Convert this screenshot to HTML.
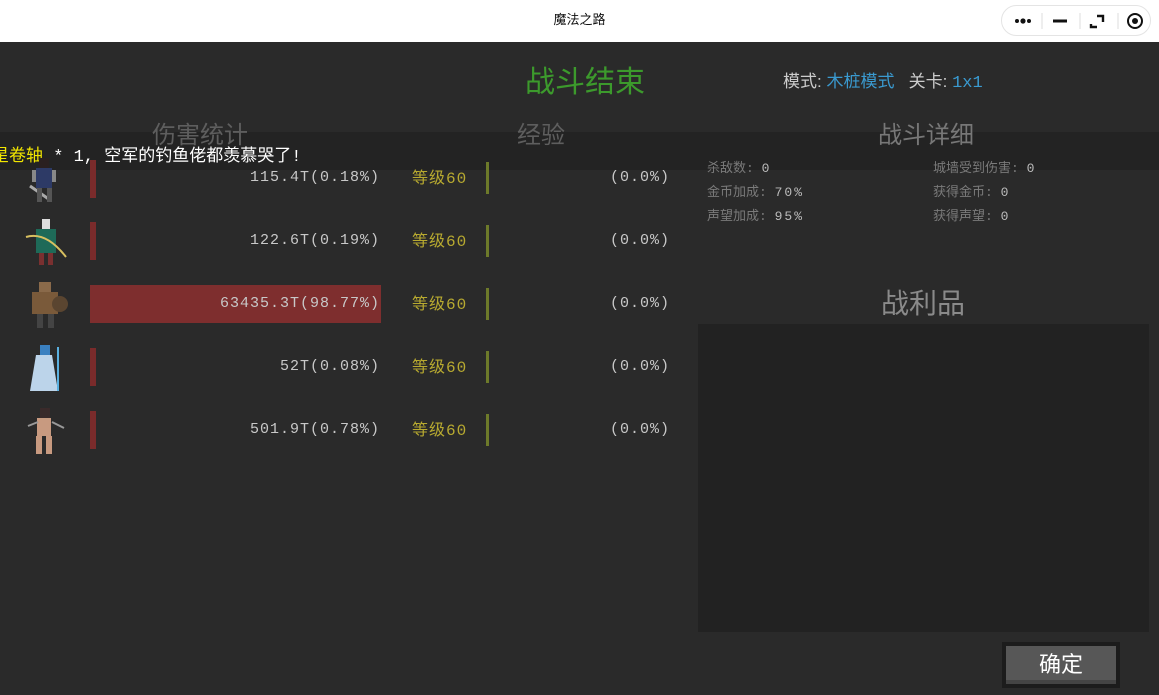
<!DOCTYPE html>
<html><head><meta charset="utf-8"><style>
*{margin:0;padding:0;box-sizing:border-box}
body{width:1159px;height:695px;overflow:hidden;background:#2a2a2a;font-family:"Liberation Mono","Noto Sans CJK SC",monospace;position:relative}
.a{position:absolute;white-space:nowrap}
.hdr{left:0;top:0;width:1159px;height:42px;background:#fff}
.cap{left:0;top:0;width:1159px;height:42px;font:13px "Liberation Sans","Noto Sans CJK SC",sans-serif;line-height:40px;text-align:center;color:#111}
.pill{left:1001px;top:5px;width:150px;height:31px;border:1px solid #e4e4e4;border-radius:16px;background:#fff}
.t{font-family:"Liberation Sans","Noto Sans CJK SC",sans-serif}
.num{font-size:15px;color:#c8c8c8;letter-spacing:1px}
.lv{font-size:16px;color:#b8aa30;font-family:"Liberation Mono","Noto Sans CJK SC",monospace;letter-spacing:1px}
.rb{width:6px;height:38px;background:#7a2b2b}
.gb{width:3px;height:32px;background:#6d7a2a}
.st{font-size:13px;color:#7a7a7a}
.st b{font-weight:normal;color:#bbb;letter-spacing:2px}
</style></head><body>
<div class="a hdr"></div>
<div class="a cap">魔法之路</div>
<div class="a pill">
 <svg width="150" height="31" style="position:absolute;left:-1px;top:-1px">
  <circle cx="16" cy="16" r="2" fill="#111"/><circle cx="22" cy="16" r="2.6" fill="#111"/><circle cx="28" cy="16" r="2" fill="#111"/>
  <line x1="41" y1="8" x2="41" y2="24" stroke="#ddd"/>
  <rect x="52" y="14.5" width="14" height="3" fill="#111"/>
  <line x1="79" y1="8" x2="79" y2="24" stroke="#ddd"/>
  <path d="M90 19v3h6M96 11h6v6" stroke="#111" stroke-width="2.4" fill="none"/>
  <line x1="117" y1="8" x2="117" y2="24" stroke="#ddd"/>
  <circle cx="134" cy="16" r="7" stroke="#111" stroke-width="2" fill="none"/><circle cx="134" cy="16" r="3" fill="#111"/>
 </svg>
</div>

<div class="a" style="left:0;top:132px;width:1159px;height:38px;background:#232323"></div>

<div class="a t" style="left:525px;top:57px;font-size:30px;color:#3c9a2c">战斗结束</div>
<div class="a t" style="left:783px;top:67px;font-size:17px;color:#ccc">模式: <span style="color:#3a9ad0">木桩模式</span>&nbsp;&nbsp;&nbsp;关卡: <span style="color:#3a9ad0;font-family:'Liberation Mono',monospace">1x1</span></div>

<div class="a t" style="left:152px;top:115px;font-size:24px;color:#5e5e5e">伤害统计</div>
<div class="a t" style="left:517px;top:115px;font-size:24px;color:#5e5e5e">经验</div>
<div class="a t" style="left:878px;top:115px;font-size:24px;color:#777">战斗详细</div>

<div class="a" style="left:-8px;top:141px;font-size:17px;color:#fff;font-family:'Liberation Mono','Noto Sans CJK SC',monospace"><span style="color:#f2e600">星卷轴</span> * 1, 空军的钓鱼佬都羡慕哭了!</div>

<div class="a rb" style="left:90px;top:160px"></div>
<div class="a rb" style="left:90px;top:222px"></div>
<div class="a rb" style="left:90px;top:285px;width:291px;background:#7e2e2e"></div>
<div class="a rb" style="left:90px;top:348px"></div>
<div class="a rb" style="left:90px;top:411px"></div>

<div class="a num" style="right:779px;top:169px">115.4T(0.18%)</div>
<div class="a num" style="right:779px;top:232px">122.6T(0.19%)</div>
<div class="a num" style="right:779px;top:295px">63435.3T(98.77%)</div>
<div class="a num" style="right:779px;top:358px">52T(0.08%)</div>
<div class="a num" style="right:779px;top:421px">501.9T(0.78%)</div>

<div class="a lv" style="left:412px;top:164px">等级60</div>
<div class="a lv" style="left:412px;top:227px">等级60</div>
<div class="a lv" style="left:412px;top:290px">等级60</div>
<div class="a lv" style="left:412px;top:353px">等级60</div>
<div class="a lv" style="left:412px;top:416px">等级60</div>

<div class="a gb" style="left:486px;top:162px"></div>
<div class="a gb" style="left:486px;top:225px"></div>
<div class="a gb" style="left:486px;top:288px"></div>
<div class="a gb" style="left:486px;top:351px"></div>
<div class="a gb" style="left:486px;top:414px"></div>

<div class="a num" style="right:489px;top:169px">(0.0%)</div>
<div class="a num" style="right:489px;top:232px">(0.0%)</div>
<div class="a num" style="right:489px;top:295px">(0.0%)</div>
<div class="a num" style="right:489px;top:358px">(0.0%)</div>
<div class="a num" style="right:489px;top:421px">(0.0%)</div>

<svg class="a" style="left:22px;top:152px" width="52" height="320">
 <g><rect x="17" y="6" width="10" height="10" fill="#2a2020"/><rect x="14" y="16" width="16" height="20" fill="#2d3a66"/><rect x="10" y="18" width="4" height="12" fill="#888"/><rect x="30" y="18" width="4" height="12" fill="#888"/><path d="M8 34l20 14" stroke="#aaa" stroke-width="3"/><rect x="15" y="36" width="5" height="14" fill="#555"/><rect x="25" y="36" width="5" height="14" fill="#555"/></g>
 <g transform="translate(0,63)"><rect x="20" y="4" width="8" height="10" fill="#ddd"/><path d="M14 14h20v24h-20z" fill="#1e6a58"/><path d="M4 22q20 -6 40 20" stroke="#d8c060" stroke-width="2" fill="none"/><rect x="17" y="38" width="5" height="12" fill="#7a3030"/><rect x="26" y="38" width="5" height="12" fill="#7a3030"/></g>
 <g transform="translate(0,126)"><rect x="17" y="4" width="12" height="10" fill="#8a6a4a"/><path d="M10 14h26v22h-26z" fill="#7a5a3a"/><circle cx="38" cy="26" r="8" fill="#5a4530"/><rect x="15" y="36" width="6" height="14" fill="#444"/><rect x="26" y="36" width="6" height="14" fill="#444"/></g>
 <g transform="translate(0,189)"><rect x="18" y="4" width="10" height="10" fill="#3a80c0"/><path d="M14 14h16l6 36h-28z" fill="#bcd4ea"/><path d="M36 6v44" stroke="#5ab0e0" stroke-width="2"/></g>
 <g transform="translate(0,252)"><rect x="18" y="4" width="10" height="10" fill="#3a2a2a"/><path d="M15 14h14v18h-14z" fill="#c89a80"/><path d="M6 22l10 -4M30 18l12 6" stroke="#999" stroke-width="2"/><rect x="14" y="32" width="6" height="18" fill="#c89a80"/><rect x="24" y="32" width="6" height="18" fill="#c89a80"/></g>
</svg>

<div class="a st" style="left:707px;top:157px">杀敌数: <b>0</b></div>
<div class="a st" style="left:707px;top:181px">金币加成: <b>70%</b></div>
<div class="a st" style="left:707px;top:205px">声望加成: <b>95%</b></div>
<div class="a st" style="left:933px;top:157px">城墙受到伤害: <b>0</b></div>
<div class="a st" style="left:933px;top:181px">获得金币: <b>0</b></div>
<div class="a st" style="left:933px;top:205px">获得声望: <b>0</b></div>

<div class="a t" style="left:881px;top:282px;font-size:28px;color:#8a8a8a">战利品</div>
<div class="a" style="left:698px;top:324px;width:451px;height:308px;background:#222"></div>

<div class="a" style="left:1002px;top:642px;width:118px;height:46px;background:#1c1c1c"></div>
<div class="a t" style="left:1006px;top:646px;width:110px;height:38px;background:#575757;border-bottom:4px solid #444;color:#fff;font-size:22px;text-align:center;line-height:38px">确定</div>
</body></html>
